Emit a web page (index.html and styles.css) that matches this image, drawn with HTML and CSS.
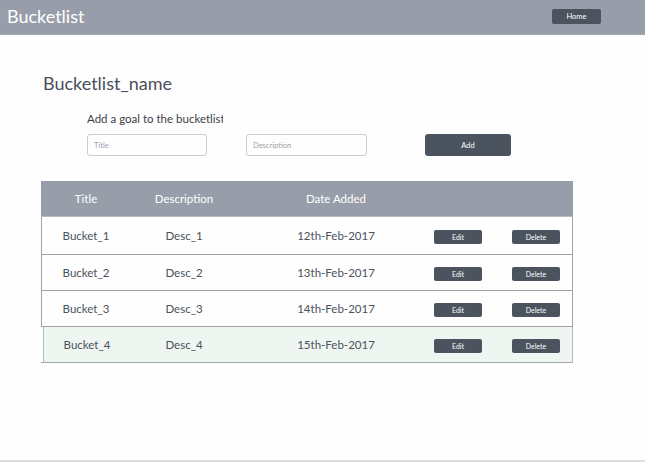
FILE: index.html
```html
<!DOCTYPE html>
<html>
<head>
<meta charset="utf-8">
<link rel="stylesheet" href="styles.css">
</head>
<body>
<header class="topbar">
  <div class="brand">Bucketlist</div>
  <button class="btn btn-home">Home</button>
</header>
<main class="content">
  <h1 class="list-name">Bucketlist_name</h1>
  <section class="add-goal">
    <div class="add-label">Add a goal to the bucketlist</div>
    <div class="add-form">
      <div class="input input-title">Title</div>
      <div class="input input-desc">Description</div>
      <button class="btn btn-add">Add</button>
    </div>
  </section>
  <div class="table">
    <div class="row head">
      <div class="cell">Title</div>
      <div class="cell">Description</div>
      <div class="cell date">Date Added</div>
      <div class="cell"></div>
      <div class="cell"></div>
    </div>
    <div class="row first">
      <div class="cell">Bucket_1</div>
      <div class="cell">Desc_1</div>
      <div class="cell date">12th-Feb-2017</div>
      <div class="cell act"><button class="btn btn-sm">Edit</button></div>
      <div class="cell act"><button class="btn btn-sm">Delete</button></div>
    </div>
    <div class="row">
      <div class="cell">Bucket_2</div>
      <div class="cell">Desc_2</div>
      <div class="cell date">13th-Feb-2017</div>
      <div class="cell act"><button class="btn btn-sm">Edit</button></div>
      <div class="cell act"><button class="btn btn-sm">Delete</button></div>
    </div>
    <div class="row">
      <div class="cell">Bucket_3</div>
      <div class="cell">Desc_3</div>
      <div class="cell date">14th-Feb-2017</div>
      <div class="cell act"><button class="btn btn-sm">Edit</button></div>
      <div class="cell act"><button class="btn btn-sm">Delete</button></div>
    </div>
    <div class="row selected">
      <div class="cell">Bucket_4</div>
      <div class="cell">Desc_4</div>
      <div class="cell date">15th-Feb-2017</div>
      <div class="cell act"><button class="btn btn-sm">Edit</button></div>
      <div class="cell act"><button class="btn btn-sm">Delete</button></div>
    </div>
  </div>
</main>
<footer class="bottom-line"></footer>
</body>
</html>
```
FILE: styles.css
```css
* { box-sizing: border-box; }
html, body { margin: 0; padding: 0; }
body {
  width: 645px;
  height: 462px;
  background: #fefefe;
  font-family: Lato, "Open Sans", sans-serif;
  color: #4a525c;
  position: relative;
  overflow: hidden;
}
.topbar {
  height: 35px;
  background: #989ea9;
  border-bottom: 1px solid #a3a9b2;
  display: flex;
  align-items: center;
  justify-content: space-between;
  padding: 0 44px 0 7px;
}
.brand {
  color: #ffffff;
  font-size: 18px;
  line-height: 22px;
  margin-top: -2px;
}
.btn {
  background: #4b535e;
  color: #ffffff;
  border: none;
  border-radius: 2px;
  font-family: Lato, sans-serif;
  padding: 0;
  display: flex;
  align-items: center;
  justify-content: center;
}
.btn-home {
  width: 49px;
  height: 15px;
  font-size: 7.5px;
  margin-top: -1px;
}
.content {
  padding: 0 0 0 41px;
}
.list-name {
  margin: 37px 0 0 2px;
  font-size: 18px;
  font-weight: normal;
  line-height: 22px;
  color: #48505a;
}
.add-goal {
  margin: 0 0 0 46px;
}
.add-label {
  margin-top: 17px;
  font-size: 11.5px;
  line-height: 15px;
  color: #3c4149;
  width: 136px;
  white-space: nowrap;
  overflow: hidden;
}
.add-form {
  margin-top: 8px;
  display: flex;
  align-items: center;
}
.input {
  height: 22px;
  border: 1px solid #c6cdd7;
  border-radius: 3px;
  font-size: 7.5px;
  color: #9aa0a8;
  display: flex;
  align-items: center;
  padding-left: 6px;
}
.input-title { width: 120px; }
.input-desc { width: 121px; margin-left: 39px; }
.btn-add {
  width: 86px;
  height: 22px;
  margin-left: 58px;
  font-size: 7.5px;
  border-radius: 3px;
}
.table {
  margin-top: 25px;
  width: 532px;
  border-bottom: 1px solid #a2a7ae;
}
.row {
  display: grid;
  grid-template-columns: 88px 108px 196px 78px 1fr;
  align-items: center;
  height: 36px;
  border: 1px solid #9ea3aa;
  border-top: none;
  font-size: 11.5px;
}
.row.head {
  height: 36px;
  background: #989ea9;
  color: #ffffff;
  border: none;
  border-bottom: 1px solid #b4bac2;
  padding-left: 1px;
}
.row.first { height: 38px; }
.row.selected {
  background: #eff6f1;
  margin-left: 2px;
  grid-template-columns: 86px 108px 196px 78px 1fr;
  border-bottom: none;
  border-left: 1px solid #b7bdc4;
  border-right: 1px solid #b7bdc4;
  height: 35px;
}
.cell {
  text-align: center;
  white-space: nowrap;
}
.cell.act {
  display: flex;
  justify-content: flex-start;
}
.btn-sm {
  width: 48px;
  height: 14px;
  font-size: 7px;
  margin-top: 2px;
}
.bottom-line {
  position: absolute;
  left: 0;
  right: 0;
  bottom: 0;
  height: 2px;
  background: #d9dee3;
}
```
